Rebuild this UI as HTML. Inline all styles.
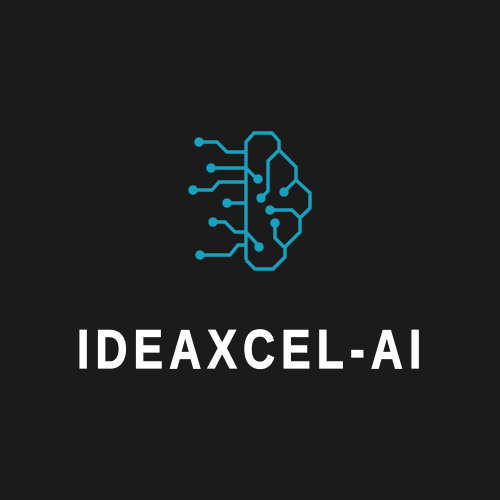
<!DOCTYPE html>
<html><head><style>
html,body{margin:0;padding:0;background:#1c1b1b;width:500px;height:500px;overflow:hidden}
</style></head><body>
<svg width="500" height="500" viewBox="0 0 500 500" xmlns="http://www.w3.org/2000/svg">
<rect width="500" height="500" fill="#1c1b1b"/>
<g fill="none" stroke="#17a2c0" stroke-width="3.4" stroke-linejoin="miter">
<path d="M246,260 L246,142 L254,133 L272,133 L279,141 L279,150 L296,167 L296,180 L310,193 L310,208 L300,218 L300,232 L285,247 L285,257 L273,269 L255,269 L246,260"/>
<path d="M279,150 L268,161 L268,191 L262,197"/>
<path d="M284,192 L296,180"/>
<path d="M270,210 L292,210 L300,218"/>
<path d="M275,223 L275,238 L285,248"/>
<path d="M199,142 L217,142 L227,152 L246,152"/>
<path d="M211,168 L246,168 L256,178"/>
<path d="M193,190 L212,190 L219,182 L246,182"/>
<path d="M227,203 L246,203"/>
<path d="M213,222 L225,222 L235,232 L246,232 L258,245"/>
<path d="M200,255 L230,255 L238,245 L246,245"/>
</g>
<g fill="#17a2c0">
<circle cx="199" cy="142" r="4.7"/>
<circle cx="211" cy="168" r="4.7"/>
<circle cx="193" cy="190" r="4.7"/>
<circle cx="227" cy="203" r="4.7"/>
<circle cx="213" cy="222" r="4.7"/>
<circle cx="200" cy="255" r="4.7"/>
<circle cx="258" cy="179" r="4.7"/>
<circle cx="261" cy="198" r="4.7"/>
<circle cx="284" cy="192" r="4.7"/>
<circle cx="270" cy="210" r="4.7"/>
<circle cx="275" cy="223" r="4.7"/>
<circle cx="259" cy="247" r="4.7"/>
</g>
<g transform="translate(77,368) scale(0.85,1.05)">
<text x="0" y="0" textLength="405" lengthAdjust="spacing" font-family="Liberation Sans Narrow, Liberation Sans, sans-serif" font-weight="bold" font-size="52" fill="#ffffff" stroke="#ffffff" stroke-width="1.2">IDEAXCEL-AI</text>
</g>
</svg>
</body></html>
